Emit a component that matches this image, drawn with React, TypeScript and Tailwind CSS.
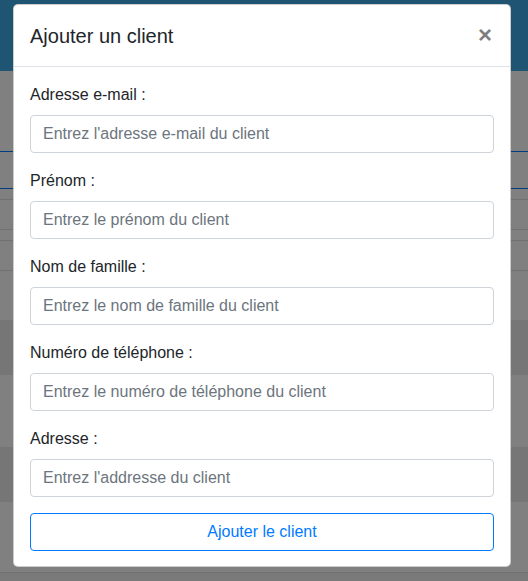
import React from 'react';

const font = "font-['Liberation_Sans',Arial,sans-serif]";

const fields = [
  { label: 'Adresse e-mail :', placeholder: "Entrez l'adresse e-mail du client", type: 'email' },
  { label: 'Prénom :', placeholder: 'Entrez le prénom du client', type: 'text' },
  { label: 'Nom de famille :', placeholder: 'Entrez le nom de famille du client', type: 'text' },
  { label: 'Numéro de téléphone :', placeholder: 'Entrez le numéro de téléphone du client', type: 'tel' },
  { label: 'Adresse :', placeholder: "Entrez l'addresse du client", type: 'text' },
];

function Backdrop() {
  // page behind the modal, already dimmed by the overlay
  return (
    <div className="flex flex-col">
      <div className="h-[71px] bg-[#1f5573]" />
      <div className="h-[81px] border-b border-[#003d80]" />
      <div className="h-[37px] border-b border-[#003d80]" />
      <div className="h-[11px] border-b border-[#6f7173]" />
      <div className="h-[30px] border-b border-[#6f7173]" />
      <div className="h-[11px] border-b border-[#6f7173]" />
      <div className="h-[30px] border-b border-[#6f7173]" />
      <div className="h-[49px]" />
      <div className="h-[55px] bg-[#767676]" />
      <div className="h-[72px]" />
      <div className="h-[55px] bg-[#767676]" />
      <div className="h-[71px] border-b border-[#6f7173]" />
      <div className="h-[40px] bg-[#7a7a7a]" />
    </div>
  );
}

export default function App() {
  return (
    <div className={`relative h-[581px] w-full overflow-hidden bg-[#808080] ${font}`}>
      <Backdrop />

      <div className="absolute inset-0 flex justify-center pt-1 pr-[4px]">
        <div className="w-[498px] h-[563px] bg-white rounded-[5px] border border-black/20 flex flex-col">
          <div className="flex items-center justify-between px-4 h-[62px] border-b border-[#dee2e6]">
            <h5 className="text-[20px] leading-[30px] text-[#212529]">Ajouter un client</h5>
            <button className="text-[24px] leading-none font-bold text-black opacity-50 pr-[2px] pb-[2px]">×</button>
          </div>

          <form className="px-4 pt-4 flex flex-col" onSubmit={e => e.preventDefault()}>
            {fields.map(f => (
              <div key={f.label} className="mb-4 flex flex-col">
                <label className="text-[16px] leading-6 text-[#212529] mb-2">{f.label}</label>
                <input
                  type={f.type}
                  placeholder={f.placeholder}
                  className="h-[38px] w-full rounded border border-[#ced4da] px-3 text-[16px] text-[#495057] placeholder:text-[#6c757d] outline-none"
                />
              </div>
            ))}
            <button
              type="submit"
              className="h-[38px] w-full rounded border border-[#007bff] text-[16px] text-[#007bff]"
            >
              Ajouter le client
            </button>
          </form>
        </div>
      </div>
    </div>
  );
}
